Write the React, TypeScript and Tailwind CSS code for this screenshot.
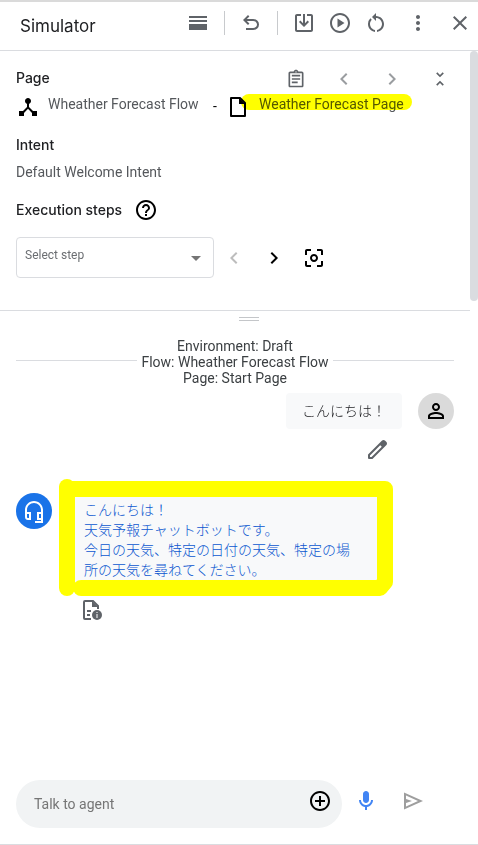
import type { ReactNode } from "react";

type IconProps = { d: string; className?: string };

function Icon({ d, className = "" }: IconProps) {
  return (
    <svg viewBox="0 0 24 24" width="24" height="24" fill="currentColor" className={`shrink-0 ${className}`} aria-hidden="true">
      <path d={d} />
    </svg>
  );
}

const paths = {
  undo: "M7 19v-2h7.1q1.575 0 2.737-1Q18 15 18 13.5T16.838 11Q15.675 10 14.1 10H7.8l2.6 2.6L9 14 4 9l5-5 1.4 1.4L7.8 8h6.3q2.425 0 4.163 1.575T20 13.5t-1.737 3.925T14.1 19Z",
  download: "M5 3h4v2H5v14h14V5h-4V3h4c1.1 0 2 .9 2 2v14c0 1.100-.9 2-2 2H5c-1.100 0-2-.9-2-2V5c0-1.100.9-2 2-2Zm6 0h2v9.200l2.600-2.600L17 11l-5 5-5-5 1.400-1.400 2.600 2.600Z",
  play: "M12 2C6.480 2 2 6.480 2 12s4.480 10 10 10 10-4.480 10-10S17.520 2 12 2Zm0 18c-4.410 0-8-3.590-8-8s3.590-8 8-8 8 3.590 8 8-3.590 8-8 8ZM9.500 7.500v9l7-4.500Z",
  restart: "M12 5V2L8 6l4 4V7c3.310 0 6 2.690 6 6 0 2.970-2.170 5.430-5 5.910v2.020c3.950-.490 7-3.850 7-7.930 0-4.420-3.580-8-8-8Zm-6 8c0-1.650.670-3.150 1.760-4.240L6.340 7.340A8.014 8.014 0 0 0 4 13c0 4.080 3.050 7.440 7 7.930v-2.020c-2.830-.480-5-2.940-5-5.910Z",
  dots: "M12 8c1.100 0 2-.9 2-2s-.9-2-2-2-2 .9-2 2 .9 2 2 2Zm0 2c-1.100 0-2 .9-2 2s.9 2 2 2 2-.9 2-2-.9-2-2-2Zm0 6c-1.100 0-2 .9-2 2s.9 2 2 2 2-.9 2-2-.9-2-2-2Z",
  close: "M19 6.410 17.590 5 12 10.590 6.410 5 5 6.410 10.590 12 5 17.590 6.410 19 12 13.410 17.590 19 19 17.590 13.410 12Z",
  left: "M15.410 7.410 14 6l-6 6 6 6 1.410-1.410L10.830 12Z",
  right: "M8.590 16.590 10 18l6-6-6-6-1.410 1.410L13.170 12Z",
  collapse: "M7.400 18.600 8.800 20l3.200-3.200 3.200 3.200 1.400-1.400L12 14Zm9.200-13.200L15.200 4 12 7.200 8.800 4 7.400 5.400 12 10Z",
  clipboard: "M7 15h7v2H7zm0-4h10v2H7zm0-4h10v2H7zm12-4h-4.180C14.400 1.840 13.300 1 12 1s-2.400.84-2.820 2H5c-1.100 0-2 .9-2 2v15c0 1.100.9 2 2 2h14c1.100 0 2-.9 2-2V5c0-1.100-.9-2-2-2Zm-7-.250c.410 0 .750.340.750.750s-.340.750-.750.750-.750-.340-.750-.750.340-.750.750-.750ZM19 20H5V5h14Z",
  flow: "m17 16-4-4V8.820C14.160 8.400 15 7.300 15 6c0-1.660-1.340-3-3-3S9 4.340 9 6c0 1.300.84 2.400 2 2.820V12l-4 4H3v5h5v-3.050l4-4.200 4 4.200V21h5v-5Z",
  help: "M11 18h2v-2h-2Zm1-16C6.480 2 2 6.480 2 12s4.480 10 10 10 10-4.480 10-10S17.520 2 12 2Zm0 18c-4.410 0-8-3.590-8-8s3.590-8 8-8 8 3.590 8 8-3.590 8-8 8Zm0-14c-2.210 0-4 1.790-4 4h2c0-1.100.9-2 2-2s2 .9 2 2c0 2-3 1.750-3 5h2c0-2.250 3-2.500 3-5 0-2.210-1.790-4-4-4Z",
  focus: "M5 15H3v4c0 1.100.9 2 2 2h4v-2H5ZM5 5h4V3H5c-1.100 0-2 .9-2 2v4h2Zm14-2h-4v2h4v4h2V5c0-1.100-.9-2-2-2Zm0 16h-4v2h4c1.100 0 2-.9 2-2v-4h-2ZM12 8c-2.210 0-4 1.790-4 4s1.790 4 4 4 4-1.790 4-4-1.790-4-4-4Zm0 6c-1.100 0-2-.9-2-2s.9-2 2-2 2 .9 2 2-.9 2-2 2Z",
  person: "M12 6c1.100 0 2 .9 2 2s-.9 2-2 2-2-.9-2-2 .9-2 2-2m0 9c2.700 0 5.800 1.290 6 2v1H6v-.990c.2-.720 3.300-2.010 6-2.010m0-11C9.790 4 8 5.790 8 8s1.790 4 4 4 4-1.790 4-4-1.790-4-4-4Zm0 9c-2.670 0-8 1.340-8 4v3h16v-3c0-2.660-5.330-4-8-4Z",
  headset: "M12 2C7 2 3 6 3 11v7c0 1.700 1.300 3 3 3h3v-8H5v-2c0-3.900 3.100-7 7-7s7 3.100 7 7v2h-4v8h4v1h-6v2h8V11c0-5-4-9-9-9ZM7 15v4H6c-.550 0-1-.450-1-1v-3Zm10 4v-4h2v4Z",
  plus: "M13 7h-2v4H7v2h4v4h2v-4h4v-2h-4Zm-1-5C6.480 2 2 6.480 2 12s4.480 10 10 10 10-4.480 10-10S17.520 2 12 2Zm0 18c-4.410 0-8-3.590-8-8s3.590-8 8-8 8 3.590 8 8-3.590 8-8 8Z",
  mic: "M12 14c1.660 0 3-1.340 3-3V5c0-1.660-1.340-3-3-3S9 3.340 9 5v6c0 1.660 1.340 3 3 3Zm5-3c0 2.760-2.240 5-5 5s-5-2.240-5-5H5c0 3.530 2.610 6.430 6 6.920V21h2v-3.080c3.390-.490 6-3.390 6-6.920Z",
  send: "M3 20.500v-17L22 12Zm2-3L17 12 5 6.500V10l6 2-6 2Z",
};

function IconButton({ label, className = "", children }: { label: string; className?: string; children: ReactNode }) {
  return (
    <button type="button" aria-label={label} className={`flex h-6 shrink-0 items-center justify-center ${className}`}>
      {children}
    </button>
  );
}

function Header() {
  return (
    <header className="flex h-[51px] items-start justify-between border-t-2 border-b border-t-[#dadada] border-b-[#dadce0] pr-[6px] pl-5">
      <h1 className="pt-3 font-[Inter,sans-serif] text-[17px] leading-6 text-[#202124]">Simulator</h1>
      <div className="flex items-center pt-[9px] text-[#5f6368]">
        <IconButton label="Layout">
          <svg viewBox="0 0 24 24" width="24" height="24" fill="currentColor" aria-hidden="true">
            <path d="M3 5h18v2H3zM3 9h18v2H3zM3 13h18v6H3z" />
          </svg>
        </IconButton>
        <span className="mx-[14px] h-6 w-px bg-[#c8cacd]" />
        <IconButton label="Undo"><Icon d={paths.undo} /></IconButton>
        <span className="mx-[14px] h-6 w-px bg-[#c8cacd]" />
        <div className="flex gap-3">
          <IconButton label="Save test case"><Icon d={paths.download} /></IconButton>
          <IconButton label="Run"><Icon d={paths.play} /></IconButton>
          <IconButton label="Restart"><Icon d={paths.restart} /></IconButton>
        </div>
        <div className="ml-[18px] flex gap-[18px]">
          <IconButton label="More"><Icon d={paths.dots} /></IconButton>
          <IconButton label="Close"><Icon d={paths.close} /></IconButton>
        </div>
      </div>
    </header>
  );
}

function Heading({ children }: { children: ReactNode }) {
  return <h2 className="font-[Inter,sans-serif] text-[14px] leading-6 font-medium text-[#202124]">{children}</h2>;
}

function Details() {
  return (
    <section className="flex">
      <div className="h-[260px] min-w-0 flex-1 border-b border-[#dadce0] pt-[14px] pl-4">
        <div className="flex items-center justify-between pr-[6px]">
          <Heading>Page</Heading>
          <div className="flex pt-[2px] text-[#5f6368]">
            <IconButton label="Copy response" className="w-12">
              <svg viewBox="0 0 24 24" width="20" height="20" fill="currentColor" aria-hidden="true">
                <path d={paths.clipboard} />
              </svg>
            </IconButton>
            <IconButton label="Previous" className="w-12 text-[#9a9da0]"><Icon d={paths.left} /></IconButton>
            <IconButton label="Next" className="w-12 text-[#9a9da0]"><Icon d={paths.right} /></IconButton>
            <IconButton label="Collapse" className="w-12">
              <svg viewBox="0 0 24 24" width="20" height="20" fill="currentColor" aria-hidden="true">
                <path d={paths.collapse} />
              </svg>
            </IconButton>
          </div>
        </div>

        <div className="mt-1 flex items-start text-sm whitespace-nowrap text-[#55585c]">
          <Icon d={paths.flow} className="text-black" />
          <span className="ml-2 w-40 leading-[18px]">Wheather Forecast Flow</span>
          <span className="mr-1 w-[14px] text-center leading-[22px] text-black">-</span>
          <svg viewBox="0 0 24 24" width="24" height="24" fill="none" stroke="black" strokeWidth="2" className="shrink-0" aria-hidden="true">
            <path d="M5 3h9l5 5v13H5z" strokeLinejoin="round" />
            <path d="M13 3v6h6z" fill="black" stroke="none" />
          </svg>
          <a href="#page" className="relative ml-[9px] leading-[18px]">
            <span>Weather Forecast Page</span>
            <span className="absolute -top-px -right-2 -left-[18px] h-4 rounded-full bg-[#ffff00] mix-blend-multiply" />
          </a>
        </div>

        <div className="mt-[14px]">
          <Heading>Intent</Heading>
          <p className="mt-[5px] text-sm leading-5 text-[#55585c]">Default Welcome Intent</p>
        </div>

        <div className="mt-4 flex items-center gap-3">
          <Heading>Execution steps</Heading>
          <IconButton label="Help"><Icon d={paths.help} className="text-black" /></IconButton>
        </div>

        <div className="mt-[15px] flex items-center">
          <div className="relative w-[198px]">
            <select aria-label="Select step" className="h-[41px] w-full appearance-none rounded-[4px] border border-[#dadce0] bg-white pr-8 pb-[5px] pl-2 text-xs text-[#6b6e72]">
              <option>Select step</option>
            </select>
            <svg viewBox="0 0 10 5" width="10" height="5" className="pointer-events-none absolute top-[19px] right-[13px]" aria-hidden="true">
              <path d="M0 0h10L5 5z" fill="#757575" />
            </svg>
          </div>
          <IconButton label="Previous step" className="w-10 text-[#bdbdbd]"><Icon d={paths.left} /></IconButton>
          <IconButton label="Next step" className="w-10"><Icon d={paths.right} /></IconButton>
          <IconButton label="Focus step" className="w-10"><Icon d={paths.focus} /></IconButton>
        </div>
      </div>
      <div className="h-[250px] w-2 rounded-full bg-[#dadce0]" />
    </section>
  );
}

function Conversation() {
  return (
    <section className="pb-6">
      <div className="pl-5">
        <div className="mx-auto mt-[6px] h-1 w-5 border-y border-[#c4c6c9]" />
      </div>

      <div className="pr-6 pl-4">
        <div className="mt-[17px] flex items-start gap-1 text-sm leading-4 text-[#3c4043]">
          <span className="mt-[22px] h-px flex-1 bg-[#dadce0]" />
          <p className="text-center whitespace-nowrap">
            Environment: Draft<br />Flow: Wheather Forecast Flow<br />Page: Start Page
          </p>
          <span className="mt-[22px] h-px flex-1 bg-[#dadce0]" />
        </div>

        <div className="mt-[7px] flex justify-end gap-4">
          <p className="rounded-[4px] bg-[#f8f9fa] px-4 py-2 text-sm leading-5 font-light text-[#202124]">こんにちは！</p>
          <span className="flex size-9 items-center justify-center rounded-full bg-[#dadada]">
            <Icon d={paths.person} className="text-black" />
          </span>
        </div>
        <div className="mt-[9px] flex justify-end pr-[65px]">
          <IconButton label="Edit" className="text-[#5f6368]">
            <svg viewBox="0 0 24 24" width="24" height="24" fill="none" stroke="currentColor" strokeWidth="2" strokeLinejoin="round" aria-hidden="true">
              <path d="M4 20v-3L17.500 3.500q1-1 2 0l1 1q1 1 0 2L7 20Z" />
              <path d="m14.500 6.500 3-3q1-1 2 0l1 1q1 1 0 2l-3 3Z" fill="currentColor" stroke="none" />
            </svg>
          </IconButton>
        </div>

        <div className="mt-[31px] flex items-start gap-4">
          <span className="flex size-9 shrink-0 items-center justify-center rounded-full bg-[#1a73e8]">
            <Icon d={paths.headset} className="text-white" />
          </span>
          <div>
            <div className="relative w-[317px] bg-[#f8f9fa] pt-[7px] pr-8 pb-2 pl-4 text-sm leading-5 font-light text-[#0b57d0]">
              <p>こんにちは！</p>
              <p>天気予報チャットボットです。</p>
              <p>今日の天気、特定の日付の天気、特定の場所の天気を尋ねてください。</p>
              <svg viewBox="0 0 334 120" width="334" height="120" className="pointer-events-none absolute -top-[14px] -left-[9px] max-w-none" fill="none" stroke="#ffff00" strokeWidth="16" strokeLinecap="round" strokeLinejoin="round" aria-hidden="true">
                <path d="M8 8V109" />
                <path d="M8 10H326V103L321 109H22" />
              </svg>
            </div>
            <div className="mt-[10px] pl-3">
              <IconButton label="Response details" className="text-[#5f6368]">
                <svg viewBox="0 0 24 24" width="24" height="24" fill="none" stroke="currentColor" strokeWidth="2" aria-hidden="true">
                  <path d="M11 21H5c-1 0-1-1-1-1V4c0-1 1-1 1-1h8l5 5v3" />
                  <path d="M12 3v6h6z" fill="currentColor" stroke="none" />
                  <path d="M7 13h4M7 17h3" />
                  <circle cx="17" cy="17" r="5" fill="currentColor" stroke="none" />
                  <path d="M17 14v1M17 16v4" stroke="white" strokeWidth="1" />
                </svg>
              </IconButton>
            </div>
          </div>
        </div>
      </div>
    </section>
  );
}

function Composer() {
  return (
    <footer className="mt-auto flex items-center border-b border-[#dadce0] pr-[53px] pb-4 pl-4">
      <div className="flex h-12 flex-1 items-center rounded-full bg-[#f1f3f4] pr-[10px] pl-[18px]">
        <input type="text" aria-label="Talk to agent" placeholder="Talk to agent" className="min-w-0 flex-1 bg-transparent text-sm outline-none placeholder:text-[#757575]" />
        <IconButton label="Add" className="mb-[6px]"><Icon d={paths.plus} className="text-black" /></IconButton>
      </div>
      <div className="mb-[6px] flex items-center">
        <IconButton label="Speak" className="w-12 text-[#4285f4]"><Icon d={paths.mic} /></IconButton>
        <IconButton label="Send" className="ml-[11px] text-[#9e9e9e]"><Icon d={paths.send} /></IconButton>
      </div>
    </footer>
  );
}

export default function App() {
  return (
    <main className="flex min-h-screen flex-col bg-white font-[Roboto,'Noto_Sans_CJK_JP',sans-serif]">
      <Header />
      <Details />
      <Conversation />
      <Composer />
    </main>
  );
}
